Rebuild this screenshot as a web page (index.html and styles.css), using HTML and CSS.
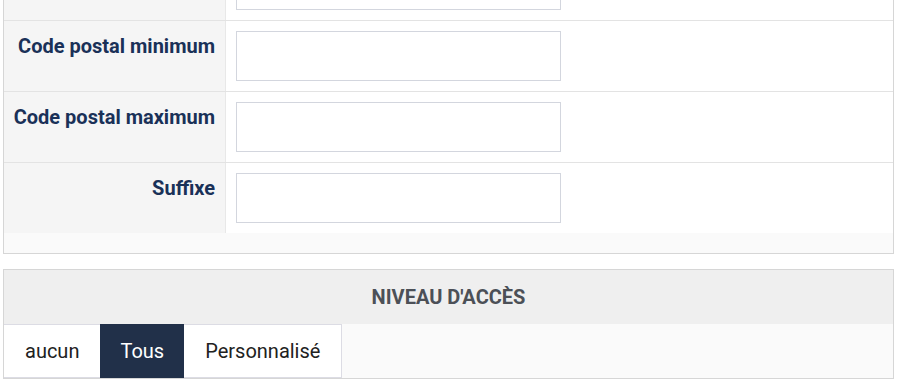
FILE: index.html
```html
<!DOCTYPE html>
<html lang="fr">
<head>
    <meta charset="UTF-8">
    <meta name="viewport" content="width=device-width, initial-scale=1.0">
    <title>Codes postaux</title>
    <link rel="stylesheet" href="styles.css">
</head>
<body>
    <div class="page">
        <div class="panel form-panel">
            <div class="form-row">
                <div class="form-label"></div>
                <div class="form-field"><input type="text" id="prefix" aria-label="Préfixe"></div>
            </div>
            <div class="form-row">
                <label class="form-label" for="cpMin">Code postal minimum</label>
                <div class="form-field"><input type="text" id="cpMin"></div>
            </div>
            <div class="form-row">
                <label class="form-label" for="cpMax">Code postal maximum</label>
                <div class="form-field"><input type="text" id="cpMax"></div>
            </div>
            <div class="form-row">
                <label class="form-label" for="suffix">Suffixe</label>
                <div class="form-field"><input type="text" id="suffix"></div>
            </div>
            <div class="panel-footer"></div>
        </div>

        <div class="panel access-panel">
            <div class="panel-heading">Niveau d'accès</div>
            <div class="panel-body">
                <div class="btn-group">
                    <button class="btn">aucun</button>
                    <button class="btn active">Tous</button>
                    <button class="btn">Personnalisé</button>
                </div>
            </div>
        </div>
    </div>
</body>
</html>
```

FILE: styles.css
```css
body {
    margin: 0;
    background-color: #fff;
    font-family: Roboto, 'Liberation Sans', sans-serif;
    color: #212121;
}
.page {
    width: 891px;
    margin-left: 3px;
    margin-top: -52px;
}
.panel {
    border: 1px solid #d6d6d6;
    background-color: #fff;
}
.form-row {
    display: flex;
    border-top: 1px solid #e3e3e3;
}
.form-label {
    width: 211px;
    flex-shrink: 0;
    padding: 13px 10px 0 0;
    text-align: right;
    font-weight: bold;
    font-size: 20px;
    line-height: 24px;
    color: #1a3158;
    background-color: #f5f5f5;
    border-right: 1px solid #e8e8e8;
}
.form-field {
    padding: 10px;
}
.form-field input {
    box-sizing: border-box;
    width: 325px;
    height: 50px;
    border: 1px solid #d3d6de;
    background-color: #fff;
    margin: 0;
}
.panel-footer {
    height: 20px;
    background-color: #fafafa;
}
.access-panel {
    margin-top: 15px;
}
.panel-heading {
    height: 54px;
    line-height: 54px;
    text-align: center;
    text-transform: uppercase;
    font-weight: bold;
    font-size: 20px;
    color: #4c5057;
    background-color: #efefef;
}
.panel-body {
    display: flex;
    background-color: #fafafa;
}
.btn-group {
    display: flex;
    border: 1px solid #dcdce4;
    border-left: none;
    background-color: #fff;
}
.btn {
    font-family: Roboto, 'Liberation Sans', sans-serif;
    font-size: 20px;
    height: 52px;
    padding: 0 21px;
    border: none;
    background-color: #fff;
    color: #212121;
    cursor: pointer;
}
.btn.active {
    background-color: #213049;
    color: #fff;
    margin: -1px 0;
    height: 54px;
    padding: 0 20px;
}
```
